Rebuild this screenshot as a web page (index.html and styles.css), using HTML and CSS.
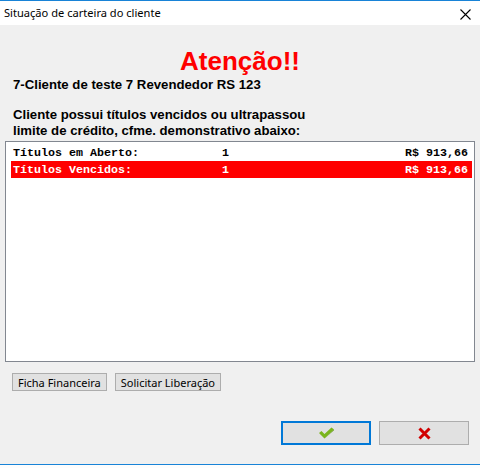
FILE: index.html
```html
<!DOCTYPE html>
<html lang="pt">
<head>
<meta charset="utf-8">
<title>Situação de carteira do cliente</title>
<link rel="stylesheet" href="styles.css">
</head>
<body>
<div class="window">
  <div class="titlebar">
    <span class="title">Situação de carteira do cliente</span>
    <svg class="close" width="11" height="11" viewBox="0 0 11 11"><path d="M0.5 0.5 L10.5 10.5 M10.5 0.5 L0.5 10.5" stroke="#000" stroke-width="1.1" fill="none"/></svg>
  </div>
  <div class="content">
    <h1 class="alert">Atenção!!</h1>
    <p class="client">7-Cliente de teste 7 Revendedor RS 123</p>
    <p class="msg">Cliente possui títulos vencidos ou ultrapassou<br>limite de crédito, cfme. demonstrativo abaixo:</p>
    <div class="list">
      <div class="row"><span class="lbl">Títulos em Aberto:</span><span class="qty">1</span><span class="amt">R$ 913,66</span></div>
      <div class="row overdue"><span class="lbl">Títulos Vencidos:</span><span class="qty">1</span><span class="amt">R$ 913,66</span></div>
    </div>
    <div class="actions">
      <button class="btn">Ficha Financeira</button>
      <button class="btn">Solicitar Liberação</button>
    </div>
    <div class="dialog-buttons">
      <button class="btn big default" aria-label="OK">
        <svg width="17" height="12" viewBox="0 0 17 12"><path d="M1 6 L3.5 4 L6.5 7 L13.5 0.5 L16 2.5 L6.5 11.5 Z" fill="#7ab51d"/><path d="M6.5 11.5 L16 2.5 L16 3.2 L6.5 11.5Z" fill="#5a8d10"/></svg>
      </button>
      <button class="btn big" aria-label="Cancelar">
        <svg width="13" height="13" viewBox="0 0 13 13"><path d="M1.5 1.5 L11.5 11.5 M11.5 1.5 L1.5 11.5" stroke="#d10000" stroke-width="3" fill="none"/></svg>
      </button>
    </div>
  </div>
  <div class="bottom-edge"></div>
</div>
</body>
</html>
```
FILE: styles.css
```css
* { box-sizing: border-box; }
html, body { margin: 0; padding: 0; }
body {
  width: 480px;
  height: 468px;
  background: #ffffff;
  font-family: "Noto Sans", "Liberation Sans", sans-serif;
  overflow: hidden;
}
.window {
  width: 480px;
  height: 468px;
  display: flex;
  flex-direction: column;
}
.titlebar {
  height: 25px;
  border-top: 1px solid #1883d7;
  background: #ffffff;
  display: flex;
  align-items: center;
  justify-content: space-between;
  padding: 0 9px 0 4px;
}
.title {
  font-size: 11.1px;
  color: #000;
  position: relative;
  top: -1px;
}
.close { display: block; margin-top: 2px; }
.content {
  flex: 1;
  background: #f0f0f0;
  border-bottom: 1px solid #1883d7;
  display: flex;
  flex-direction: column;
}
.bottom-edge { height: 3px; background: #fdfdfd; }
.alert {
  margin: 21px 0 0;
  font-family: "Liberation Sans", Arial, sans-serif;
  font-size: 26px;
  line-height: 30px;
  font-weight: bold;
  color: #ff0000;
  text-align: center;
}
.client, .msg {
  font-family: "Liberation Sans", Arial, sans-serif;
  font-size: 13.2px;
  font-weight: bold;
  line-height: 16px;
  color: #000;
  margin: 1px 0 0 13px;
}
.msg { margin-top: 14px; }
.list {
  margin: 2px 0 0 5px;
  width: 470px;
  height: 221px;
  background: #fff;
  border: 1px solid #828790;
  padding: 2px 2px 0 5px;
}
.row {
  display: grid;
  grid-template-columns: 209px 1fr auto;
  height: 17px;
  padding: 1px 4px 0 2px;
  font-family: "Liberation Mono", "Courier New", monospace;
  font-size: 11.67px;
  line-height: 16px;
  font-weight: bold;
  color: #000;
  white-space: pre;
}
.row.overdue { background: #ff0000; color: #fff; }
.actions {
  display: flex;
  gap: 8px;
  margin: 11px 0 0 12px;
}
.btn {
  font-family: "Noto Sans", "Liberation Sans", sans-serif;
  font-size: 11px;
  background: #e1e1e1;
  border: 1px solid #adadad;
  color: #000;
  padding: 0 5px;
  height: 18px;
  line-height: 15px;
  margin: 0;
}
.dialog-buttons {
  display: flex;
  gap: 8px;
  justify-content: flex-end;
  margin: 30px 11px 0 0;
}
.btn.big {
  width: 90px;
  height: 24px;
  display: flex;
  align-items: center;
  justify-content: center;
  padding: 0;
}
.btn.big.default { border: 2px solid #0078d7; }
```
